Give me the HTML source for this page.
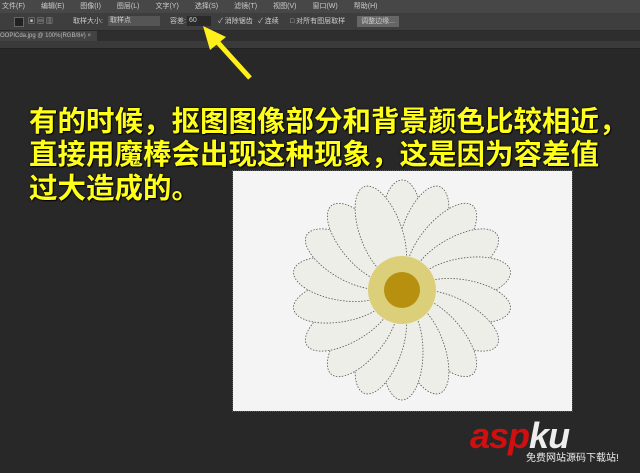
<!DOCTYPE html><html><head><meta charset="utf-8"><style>
body{margin:0;width:640px;height:473px;background:#282828;position:relative;overflow:hidden;font-family:"Liberation Sans","Noto Sans CJK SC",sans-serif}
.menu{position:absolute;left:0;top:0;width:640px;height:13px;background:#474747;color:#ccc;font-size:7px;line-height:13px}
.menu span{margin:0 0 0 2px;padding-right:14px}
.opt{position:absolute;top:13px;left:0;width:640px;height:17px;background:#3e3e3e;border-bottom:1px solid #2a2a2a;font-size:7px;color:#ccc;line-height:17px}
.tab{position:absolute;top:31px;left:0;width:640px;height:10px;background:#2e2e2e;font-size:6px;color:#bbb;line-height:10px}
.tab b{display:inline-block;background:#434343;padding:0 6px 0 0;font-weight:normal}
.ruler{position:absolute;top:41px;left:0;width:640px;height:7px;background:#3a3a3a;border-bottom:1px solid #222}
.t{position:absolute;left:29px;color:#ffff19;font-weight:bold;font-size:28.5px;line-height:32px;text-shadow:0 0 2px #000,1px 1px 1px #000;white-space:nowrap}
.img{position:absolute;left:233px;top:171px;width:339px;height:240px;background:#f4f4f4;outline:1px dotted #555}
</style></head><body>
<div class="menu"><span>文件(F)</span><span>编辑(E)</span><span>图像(I)</span><span>图层(L)</span><span>文字(Y)</span><span>选择(S)</span><span>滤镜(T)</span><span>视图(V)</span><span>窗口(W)</span><span>帮助(H)</span></div>
<div class="opt"><span style="position:absolute;left:14px;top:4px;width:8px;height:8px;background:#222;border:1px solid #666"></span><span style="position:absolute;left:28px">▣ ▤ ▥</span><span style="position:absolute;left:73px">取样大小:</span><span style="position:absolute;left:108px;top:3px;width:52px;height:10px;background:#555;line-height:10px">&nbsp;取样点</span><span style="position:absolute;left:170px">容差:</span><span style="position:absolute;left:187px;top:3px;width:24px;height:10px;background:#2a2a2a;line-height:10px">&nbsp;60</span><span style="position:absolute;left:218px">✓ 消除锯齿</span><span style="position:absolute;left:258px">✓ 连续</span><span style="position:absolute;left:290px">□ 对所有图层取样</span><span style="position:absolute;left:357px;top:3px;width:42px;height:11px;background:#666;line-height:11px;text-align:center">调整边缘...</span></div>
<div class="tab"><b>OOPICda.jpg @ 100%(RGB/8#) ×</b></div>
<div class="ruler"></div>
<svg style="position:absolute;left:0;top:0" width="640" height="473"><line x1="250" y1="78" x2="212" y2="36" stroke="#ffef1a" stroke-width="5"/><polygon points="203,26 226,37 210,50" fill="#ffef1a"/></svg>
<div class="t" style="top:106px">有的时候，抠图图像部分和背景颜色比较相近，</div>
<div class="t" style="top:139px">直接用魔棒会出现这种现象，这是因为容差值</div>
<div class="t" style="top:173px">过大造成的。</div>
<div class="img"><svg width="339" height="240"><g transform="translate(169,119)" fill="#eeeee9" stroke="#555" stroke-width="0.8" stroke-dasharray="1.5 1.5">
<g id="p"><ellipse cx="0" cy="-62" rx="21" ry="48"/></g>
<use href="#p" transform="rotate(20)"/><use href="#p" transform="rotate(40)"/><use href="#p" transform="rotate(60)"/><use href="#p" transform="rotate(80)"/><use href="#p" transform="rotate(100)"/><use href="#p" transform="rotate(120)"/><use href="#p" transform="rotate(140)"/><use href="#p" transform="rotate(160)"/><use href="#p" transform="rotate(180)"/><use href="#p" transform="rotate(200)"/><use href="#p" transform="rotate(220)"/><use href="#p" transform="rotate(240)"/><use href="#p" transform="rotate(260)"/><use href="#p" transform="rotate(280)"/><use href="#p" transform="rotate(300)"/><use href="#p" transform="rotate(320)"/><use href="#p" transform="rotate(340)"/>
<circle r="34" fill="#dccf7a" stroke="none"/><circle r="18" fill="#b8900f" stroke="none"/></g></svg></div>
<div style="position:absolute;left:470px;top:415px;font-size:36px;font-weight:bold;font-style:italic;color:#d01010;letter-spacing:-1px">asp<span style="color:#eee">ku</span></div>
<div style="position:absolute;left:526px;top:449px;font-size:10px;color:#eee">免费网站源码下载站!</div>
</body></html>
